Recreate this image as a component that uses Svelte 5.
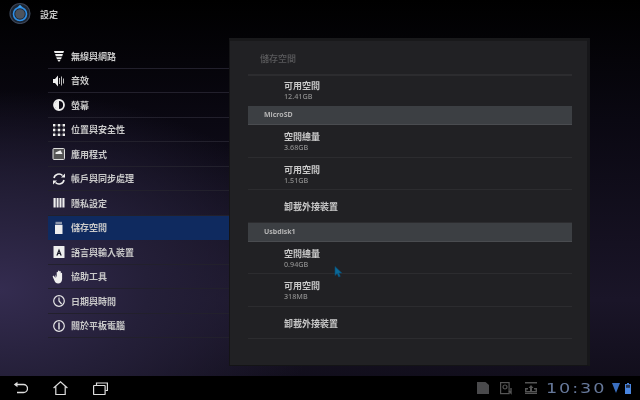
<script>
  const menu = [
    { label: '無線與網路', icon: 'wifi' },
    { label: '音效', icon: 'sound' },
    { label: '螢幕', icon: 'screen' },
    { label: '位置與安全性', icon: 'grid' },
    { label: '應用程式', icon: 'apps' },
    { label: '帳戶與同步處理', icon: 'sync' },
    { label: '隱私設定', icon: 'privacy' },
    { label: '儲存空間', icon: 'storage', active: true },
    { label: '語言與輸入裝置', icon: 'lang' },
    { label: '協助工具', icon: 'hand' },
    { label: '日期與時間', icon: 'clock' },
    { label: '關於平板電腦', icon: 'info' }
  ];
  const groups = [
    { rows: [{ t: '可用空間', s: '12.41GB' }] },
    { head: 'MicroSD', rows: [{ t: '空間總量', s: '3.68GB' }, { t: '可用空間', s: '1.51GB' }, { t: '卸載外接裝置' }] },
    { head: 'Usbdisk1', rows: [{ t: '空間總量', s: '0.94GB' }, { t: '可用空間', s: '318MB' }, { t: '卸載外接裝置' }] }
  ];
</script>

<div class="screen">
  <header class="top">
    <svg class="logo" width="22" height="22" viewBox="0 0 22 22">
      <circle cx="11" cy="11.500" r="10" fill="#1c2532" stroke="#3c4658" stroke-width="1.200"/>
      <circle cx="11" cy="12" r="6.500" fill="none" stroke="#2f8fe6" stroke-width="1.600"/>
      <circle cx="11" cy="12" r="4.800" fill="#4d535c"/>
      <path d="M8.200 5.500l2.800-2.800 2.800 2.800z" fill="#3aa0f0"/>
    </svg>
    <span class="title">設定</span>
  </header>

  <main class="middle">
    <nav class="side">
      {#each menu as m}
        <div class="item" class:active={m.active}>
          <svg class="ico" width="14" height="14" viewBox="0 0 14 14" fill="#eee">
            {#if m.icon === 'wifi'}
              <path d="M2 2h10l-.7 2H2.700zM3.100 5h7.800l-.7 2.200H3.800zM4.200 8.200h5.600l-.8 2H5zM5.400 11h3.200L7 13z"/>
            {:else if m.icon === 'sound'}
              <path d="M1 5h2l3-3.500V12.500L3 9H1z"/><path d="M7.500 4v6M9.500 2.500v9M11.500 4.500v5" stroke="#bbb" stroke-width="1" fill="none"/>
            {:else if m.icon === 'screen'}
              <circle cx="7" cy="7" r="5" fill="none" stroke="#eee" stroke-width="1.800"/><path d="M7 2.500a4.500 4.500 0 0 0 0 9z"/>
            {:else if m.icon === 'grid'}
              <path d="M1 1h2.400v2.400H1zM5.800 1h2.400v2.400H5.800zM10.600 1H13v2.400h-2.400zM1 5.800h2.400v2.400H1zM5.800 5.800h2.400v2.400H5.800zM10.600 5.800H13v2.400h-2.400zM1 10.600h2.400V13H1zM5.800 10.600h2.400V13H5.800zM10.600 10.600H13V13h-2.400z"/>
              <path d="M3.400 2h2.400M8.200 2h2.400M3.400 7h2.400M8.200 7h2.400M3.400 12h2.400M8.200 12h2.400M2.200 3.400v2.400M7 3.400v2.400M11.800 3.400v2.400M2.200 8.200v2.400M7 8.200v2.400M11.800 8.200v2.400" stroke="#777" stroke-width=".7"/>
            {:else if m.icon === 'apps'}
              <rect x="1" y="1.500" width="11.500" height="11" rx="1" fill="#555" stroke="#ddd" stroke-width="1"/><path d="M3.500 5.500l5-2.300 2 3.800h-7z" fill="#eee"/>
            {:else if m.icon === 'sync'}
              <path d="M2 6a5 5 0 0 1 8.500-2.500M12 8a5 5 0 0 1-8.500 2.500" fill="none" stroke="#eee" stroke-width="1.600"/><path d="M9 5.500h4V1.500zM5 8.500H1v4z"/>
            {:else if m.icon === 'privacy'}
              <path d="M1.500 2h2.200v9.500H1.500zM4.600 2h2v9.500h-2zM7.500 2h2v9.500h-2zM10.400 2h2.100v9.500h-2.100z"/>
            {:else if m.icon === 'storage'}
              <path d="M3.500 .8h6.500v2.400H3.500z" fill="#8a94aa"/><path d="M3 3.800h7.500v9.200H3z"/>
            {:else if m.icon === 'lang'}
              <rect x="1.500" y="1" width="11" height="12" rx=".6"/><path d="M7 3.500L4.300 10.500h1.500l.5-1.400h1.500l.5 1.400h1.500zM6.600 8L7 6.500 7.400 8z" fill="#1a1a28" fill-rule="evenodd"/>
            {:else if m.icon === 'hand'}
              <path d="M3.500 4.500l1.200 3V2.500c0-1 1.200-1 1.300 0V6.500V1.300c0-1 1.300-1 1.400 0V6.500V1.800c0-1 1.300-1 1.400 0V7V3.500c0-1 1.300-1 1.300 0V9c0 3-2 4.500-4 4.500-1.800 0-3-1-3.500-2.500L.8 7c-.3-1 .8-1.500 1.400-.8l1.200 1.800z"/>
            {:else if m.icon === 'clock'}
              <circle cx="7" cy="7" r="5.300" fill="none" stroke="#e6e6e6" stroke-width="1.200"/><path d="M7 3.500V7l2.600 3" fill="none" stroke="#e6e6e6" stroke-width="1.200"/>
            {:else if m.icon === 'info'}
              <circle cx="7" cy="7" r="5.300" fill="none" stroke="#e6e6e6" stroke-width="1.200"/><path d="M6.300 3.500h1.400v7H6.300z"/>
            {/if}
          </svg>
          <span>{m.label}</span>
        </div>
      {/each}
    </nav>

    <section class="panel">
      <div class="ptitle">儲存空間</div>
      {#each groups as g}
        {#if g.head}<div class="ghead">{g.head}</div>{/if}
        {#each g.rows as r}
          <div class="row" class:last={!g.head} class:plain={!r.s}>
            <div class="rt">{r.t}</div>
            {#if r.s}<div class="rs">{r.s}</div>{/if}
          </div>
        {/each}
      {/each}
    </section>
  </main>

  <footer class="bar">
    <div class="nav">
      <svg width="15" height="14" viewBox="0 0 15 14" fill="none" stroke="#ddd" stroke-width="1.300">
        <path d="M3 3.500h7.500a4 4 0 0 1 0 8H4"/><path d="M4.500 .8L.8 3.500 4.500 6.200z" fill="#ddd" stroke="none"/>
      </svg>
      <svg width="15" height="14" viewBox="0 0 15 14" fill="none" stroke="#ddd" stroke-width="1.200">
        <path d="M.6 7L7.500 .8 14.400 7M2.800 5.500v8h9.400v-8"/>
      </svg>
      <svg width="15" height="13" viewBox="0 0 15 13" fill="none" stroke="#ddd" stroke-width="1.200">
        <path d="M3.500 3V1h10.900v7.500h-2"/><rect x=".6" y="3.500" width="11.500" height="9" rx=".5"/>
      </svg>
    </div>
    <div class="status">
      <svg class="s1" width="12" height="12" viewBox="0 0 12 12"><path d="M0 0h8.500L12 3v9H0z" fill="#4a4a4c"/></svg>
      <svg class="s2" width="13" height="13" viewBox="0 0 13 13" fill="none" stroke="#555" stroke-width="1.200">
        <rect x=".6" y=".6" width="8.500" height="11"/><circle cx="5" cy="5" r="2"/><path d="M11 6v5l-2-2" stroke-width="1.400"/>
      </svg>
      <svg class="s3" width="12" height="12" viewBox="0 0 12 12" fill="#555">
        <path d="M0 0h12v1.600H0zM0 10.400h12V12H0zM0 6h3v1.400H1.400v1.600h9.200V7.400H9V6h3v4H0zM6 3l2.500 3H7v3H5V6H3.500z"/>
      </svg>
      <span class="clock"><span>10:30</span></span>
      <svg class="s4" width="8" height="10" viewBox="0 0 8 10"><path d="M0 0h8L4 10z" fill="#3a6fc0"/></svg>
      <svg class="s5" width="6" height="11" viewBox="0 0 6 11"><path d="M2 0h2v1h2v10H0V1h2z" fill="#4a86e0"/><path d="M1 1.800h4v3H1z" fill="#27324a"/></svg>
    </div>
  </footer>

  <svg class="cursor" width="9" height="12" viewBox="0 0 9 12">
    <path d="M1 .5v9l2.200-2 1.500 3.500 1.600-.7-1.500-3.300h3z" fill="#0a6a9a" stroke="#0b4a70" stroke-width=".6"/>
  </svg>
</div>

<style>
  :global(body) { margin: 0; background: #000; }
  .screen {
    position: relative;
    width: 640px;
    height: 400px;
    overflow: hidden;
    display: flex;
    flex-direction: column;
    font-family: "Noto Sans CJK TC", "Noto Sans", sans-serif;
    background:
      radial-gradient(ellipse 330px 200px at 0px 290px, #342c50 0%, #241f38 45%, rgba(20,16,32,0) 100%),
      linear-gradient(180deg, #000 0%, #0a0812 30%, #1a1528 75%, #0f0c18 100%);
  }
  .top {
    height: 38px;
    flex: none;
    display: flex;
    align-items: center;
    padding-left: 9px;
    gap: 9px;
    box-sizing: border-box;
    padding-bottom: 12px;
  }
  .title { color: #c4c4c4; font-size: 9px; font-weight: 700; margin-top: 3px; filter: blur(.3px); }
  .middle { flex: 1; display: flex; min-height: 0; padding-left: 48px; }
  .side { width: 181px; flex: none; padding-top: 6px; box-sizing: border-box; }
  .item {
    height: 24.500px;
    box-sizing: border-box;
    display: flex;
    align-items: center;
    gap: 4px;
    padding: 1px 0 0 4px;
    border-bottom: 1px solid #22202c;
    color: #c8c8c8;
    font-size: 9px;
    font-weight: 700;
  }
  .item span { filter: blur(.3px); }
  .item.active { background: #0f2a5f; border-bottom-color: #0f2a5f; }
  .ico { flex: none; margin-right: 1px; }
  .panel {
    width: 361px;
    height: 328px;
    flex: none;
    box-sizing: border-box;
    background: #212124;
    border: 1px solid #141416;
    border-top: 3px solid #19191b;
    border-right: 3px solid #17171a;
    padding: 0 15px 0 18px;
  }
  .ptitle {
    height: 35px;
    box-sizing: border-box;
    border-bottom: 2px solid #2c2c2f;
    padding: 11px 0 0 12px;
    color: #5a5a5c;
    font-size: 9px;
    line-height: 13px;
    font-weight: 500;
    filter: blur(.3px);
  }
  .ghead {
    height: 19px;
    background: #3c3f43;
    border-bottom: 1px solid #4a4c50;
    box-sizing: border-box;
    padding-left: 16px;
    color: #b4b4b4;
    font: 700 7px/18px "Noto Sans", sans-serif;
    filter: blur(.2px);
  }
  .row {
    height: 32.500px;
    box-sizing: border-box;
    border-bottom: 1px solid #2c2c2f;
    padding: 5px 0 0 36px;
  }
  .row.last { border-bottom: 0; height: 30px; padding-top: 3px; }
  .row.plain { padding-top: 10px; }
  .rt { color: #c8c8c8; font-size: 9px; line-height: 13px; font-weight: 700; filter: blur(.3px); }
  .rs { color: #8e8e8e; font: 500 7.200px/9px "Noto Sans", sans-serif; filter: blur(.2px); }
  .bar {
    height: 24px;
    flex: none;
    background: #000;
    display: flex;
    align-items: center;
    justify-content: space-between;
    padding: 0 9px 0 13px;
  }
  .nav { display: flex; align-items: center; gap: 25px; }
  .status { display: flex; align-items: center; }
  .s2 { margin-left: 11px; }
  .s3 { margin-left: 12px; }
  .s4 { margin-left: 6px; }
  .s5 { margin-left: 5px; }
  .clock {
    margin-left: 9px;
    width: 60px;
    color: #66789a;
    font: 400 14px/14px "DejaVu Sans", sans-serif;
    white-space: nowrap;
  }
  .clock span {
    display: inline-block;
    letter-spacing: 1.500px;
    transform: scaleX(1.260);
    transform-origin: left center;
  }
  .cursor { position: absolute; left: 334px; top: 266px; }
</style>
